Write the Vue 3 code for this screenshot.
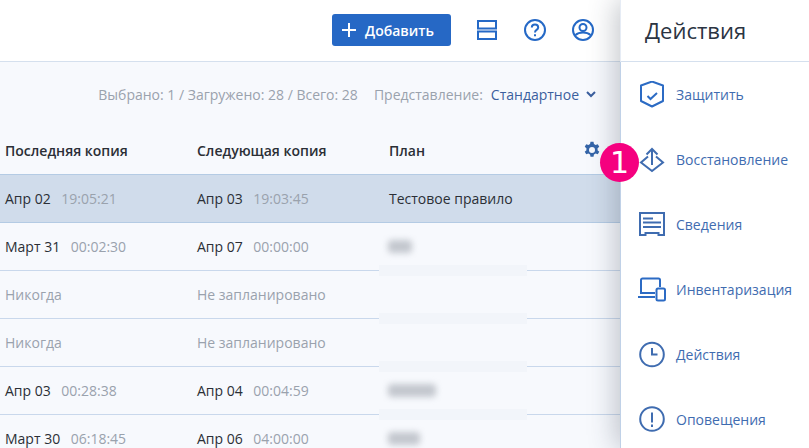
<template>
  <div class="page">
    <div class="main">
      <header class="topbar">
        <button class="add-btn">
          <svg width="16" height="16" viewBox="0 0 16 16"><path d="M8 1v14M1 8h14" stroke="#fff" stroke-width="2" fill="none" /></svg>
          <span>Добавить</span>
        </button>
        <svg class="top-icon" width="22" height="22" viewBox="0 0 22 22" fill="none" stroke="#2569c6" stroke-width="2">
          <rect x="2" y="2" width="18" height="7.5" />
          <rect x="2" y="12.5" width="18" height="7.5" />
        </svg>
        <svg class="top-icon" width="22" height="22" viewBox="0 0 22 22" fill="none" stroke="#2569c6" stroke-width="2">
          <circle cx="11" cy="11" r="10" />
          <path d="M7.8 8.6c0-1.9 1.4-3 3.2-3s3.2 1.1 3.2 2.800c0 2.600-3.200 2.400-3.200 5" />
          <path d="M11 15.200v2" />
        </svg>
        <svg class="top-icon" width="22" height="22" viewBox="0 0 22 22" fill="none" stroke="#2569c6" stroke-width="2">
          <circle cx="11" cy="11" r="10" />
          <circle cx="11" cy="8.500" r="3.500" />
          <path d="M3.500 16c2-1.800 4-2.500 7.500-2.500s5.500 .7 7.500 2.500" />
        </svg>
      </header>

      <div class="content">
        <div class="stats">
          <span>Выбрано: 1 / Загружено: 28 / Всего: 28</span>
          <span class="view-label">Представление:</span>
          <span class="view-value">Стандартное</span>
          <svg width="10" height="7" viewBox="0 0 10 7" fill="none" stroke="#3b5f9e" stroke-width="2"><path d="M1 1l4 4 4-4" /></svg>
        </div>

        <div class="thead">
          <div class="cell">Последняя копия</div>
          <div class="cell">Следующая копия</div>
          <div class="cell">План</div>
          <svg class="gear" width="18" height="18" viewBox="0 0 24 24">
            <path
              fill="#3565a8"
              fill-rule="evenodd"
              d="M10 1h4l.6 3a8.500 8.500 0 0 1 2.200 1.300l2.900-1 2 3.400-2.300 2a8.500 8.500 0 0 1 0 2.600l2.300 2-2 3.400-2.900-1a8.500 8.500 0 0 1-2.200 1.300l-.6 3h-4l-.6-3a8.500 8.500 0 0 1-2.200-1.300l-2.900 1-2-3.400 2.300-2a8.500 8.500 0 0 1 0-2.600l-2.300-2 2-3.400 2.900 1A8.500 8.500 0 0 1 9.400 4zM12 8a4 4 0 1 0 0 8 4 4 0 0 0 0-8z"
            />
          </svg>
        </div>

        <div v-for="(row, i) in rows" :key="i" class="row" :class="{ selected: row.selected }">
          <div class="cell">
            <template v-if="row.last"><span class="date">{{ row.last }}</span><span class="time">{{ row.lastTime }}</span></template>
            <span v-else class="muted">Никогда</span>
          </div>
          <div class="cell">
            <template v-if="row.next"><span class="date">{{ row.next }}</span><span class="time">{{ row.nextTime }}</span></template>
            <span v-else class="muted">Не запланировано</span>
          </div>
          <div class="cell plan">
            <span v-if="row.plan">{{ row.plan }}</span>
            <i v-else-if="row.smudge" class="smudge" :style="{ width: row.smudge + 'px' }"></i>
          </div>
          <div v-if="i > 0" class="mask"></div>
        </div>
      </div>
    </div>

    <aside class="panel">
      <h2 class="panel-title">Действия</h2>
      <ul class="actions">
        <li>
          <svg width="28" height="28" viewBox="0 0 28 28" fill="none" stroke="#2c6bc4" stroke-width="2">
            <path d="M14 .5L25 4.500V20L14 25.500 3 20V4.500z" stroke-linejoin="round" />
            <path d="M9.500 15l3 3 6.500-6" />
          </svg>
          <span>Защитить</span>
        </li>
        <li>
          <svg width="28" height="28" viewBox="0 0 28 28" fill="none" stroke="#3f6cb0" stroke-width="2">
            <path d="M10 10.500L3 16.500l11 8.500 11-8.500-7-6" />
            <path d="M14 19V3M8.500 8.500L14 3l5.500 5.500" />
          </svg>
          <span>Восстановление</span>
        </li>
        <li>
          <svg width="28" height="28" viewBox="0 0 28 28" fill="none" stroke="#3f6cb0" stroke-width="2">
            <path d="M2 2h24v22h-5.500v-2h-13v2H2z" />
            <path d="M5 7.500h10M5 11.500h18M5 16h18" />
          </svg>
          <span>Сведения</span>
        </li>
        <li>
          <svg width="28" height="28" viewBox="0 0 28 28" fill="none" stroke="#2c6bc4" stroke-width="2">
            <path d="M17 17H3V4a1.500 1.500 0 0 1 1.500-1.500h16A1.500 1.500 0 0 1 22 4v7" />
            <path d="M0 21h17" />
            <rect x="18.500" y="12.500" width="8.500" height="12" rx="1.500" />
          </svg>
          <span>Инвентаризация</span>
        </li>
        <li>
          <svg width="28" height="28" viewBox="0 0 28 28" fill="none" stroke="#3f6cb0" stroke-width="2">
            <circle cx="14" cy="13.500" r="11.800" />
            <path d="M14 7v6.500h5.500" />
          </svg>
          <span>Действия</span>
        </li>
        <li>
          <svg width="28" height="28" viewBox="0 0 28 28" fill="none" stroke="#3f6cb0" stroke-width="2">
            <circle cx="14" cy="13" r="11.800" />
            <path d="M14 6.500v10M14 18.500v2.500" />
          </svg>
          <span>Оповещения</span>
        </li>
      </ul>
    </aside>

    <div class="badge">1</div>
  </div>
</template>

<script setup>
const rows = [
  { last: 'Апр 02', lastTime: '19:05:21', next: 'Апр 03', nextTime: '19:03:45', plan: 'Тестовое правило', selected: true },
  { last: 'Март 31', lastTime: '00:02:30', next: 'Апр 07', nextTime: '00:00:00', smudge: 24 },
  {},
  {},
  { last: 'Апр 03', lastTime: '00:28:38', next: 'Апр 04', nextTime: '00:04:59', smudge: 48 },
  { last: 'Март 30', lastTime: '06:18:45', next: 'Апр 06', nextTime: '04:00:00', smudge: 32 },
]
</script>

<style>
html,
body {
  margin: 0;
  overflow: hidden;
}
</style>

<style scoped>
.page {
  position: relative;
  display: flex;
  width: 809px;
  height: 448px;
  overflow: hidden;
  font-family: "Open Sans", sans-serif;
  font-size: 14px;
  color: #2b2f36;
  background: #fff;
}

.main {
  width: 620px;
  flex-shrink: 0;
}

.topbar {
  display: flex;
  align-items: center;
  height: 61px;
  padding-left: 332px;
  background: #fff;
  border-bottom: 1px solid #d5e0ee;
}

.add-btn {
  display: flex;
  flex-shrink: 0;
  align-items: center;
  gap: 8px;
  width: 119px;
  height: 32px;
  margin-top: -1px;
  margin-right: 25px;
  padding: 0 0 0 9px;
  border: 0;
  border-radius: 3px;
  background: #2668c5;
  color: #fff;
  font-family: inherit;
  font-size: 14px;
  font-weight: 600;
}

.top-icon {
  flex-shrink: 0;
  margin-right: 26px;
  margin-top: -1px;
}

.content {
  height: 386px;
  background: #f7f9fd;
}

.stats {
  display: flex;
  align-items: center;
  justify-content: flex-end;
  height: 65px;
  padding-right: 24px;
  color: #9aa2ad;
}

.view-label {
  margin-left: 16px;
}

.view-value {
  margin-left: 8px;
  margin-right: 7px;
  color: #3b5f9e;
}

.thead {
  position: relative;
  display: flex;
  align-items: center;
  height: 47px;
  border-bottom: 1px solid #b4cbe4;
  font-weight: 600;
}

.cell {
  width: 192px;
  padding-left: 5px;
  box-sizing: border-box;
  white-space: nowrap;
}

.plan {
  width: 148px;
}

.gear {
  position: absolute;
  left: 583px;
  top: 14px;
}

.row {
  position: relative;
  display: flex;
  align-items: center;
  height: 47px;
  border-bottom: 1px solid #c9d8ec;
}

.row.selected {
  background: #d0dceb;
  border-bottom-color: #b4cbe4;
}

.date {
  margin-right: 10.5px;
}

.time,
.muted {
  color: #9aa2ad;
}

.smudge {
  display: block;
  height: 13px;
  margin-left: -1px;
  border-radius: 4px;
  background: #c3c7ce;
  filter: blur(3px);
}

.mask {
  position: absolute;
  left: 379px;
  width: 148px;
  bottom: -6px;
  height: 11px;
  background: #f2f5fa;
}

.panel {
  position: relative;
  flex: 1;
  background: #fff;
  box-shadow: -4px 0 26px rgba(40, 50, 70, 0.28);
}

.panel-title {
  height: 61px;
  margin: 0;
  padding-left: 24px;
  border-left: 1px solid #e6ecf5;
  border-bottom: 1px solid #d5e0ee;
  font-size: 22px;
  font-weight: 400;
  line-height: 60px;
  color: #2b3442;
}

.actions {
  height: 386px;
  margin: 0;
  padding: 0;
  list-style: none;
  border-left: 1px solid #c0d1e7;
}

.actions li {
  display: flex;
  align-items: center;
  gap: 10px;
  height: 65px;
  padding-left: 17px;
  color: #3f6cb0;
}

.badge {
  position: absolute;
  left: 600px;
  top: 143px;
  width: 39px;
  height: 39px;
  border-radius: 50%;
  background: #f5007f;
  color: #fff;
  font-family: "DejaVu Sans", sans-serif;
  font-size: 30px;
  line-height: 39px;
  text-align: center;
}
</style>
